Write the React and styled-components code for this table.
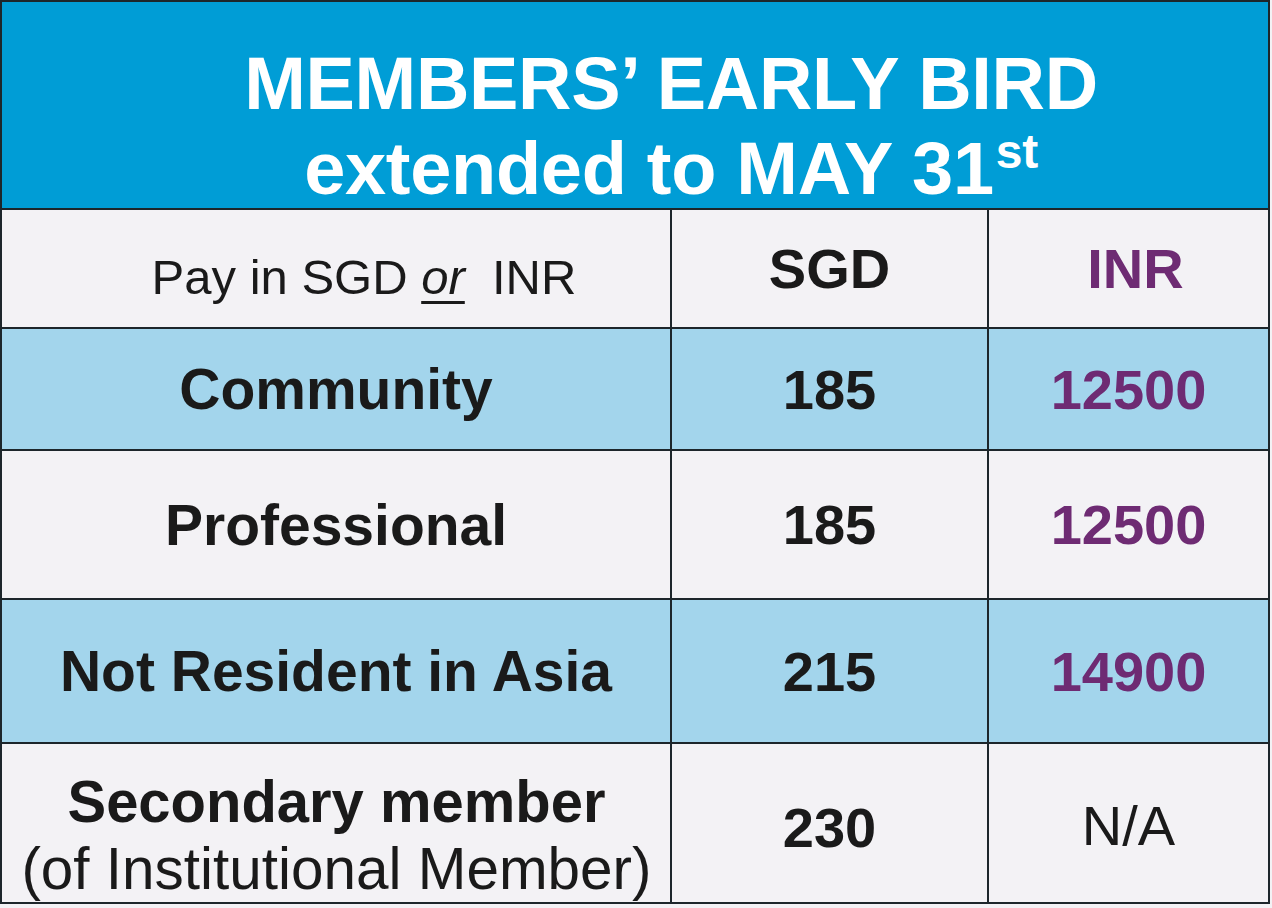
import { styled, createGlobalStyle } from "styled-components";

const GlobalStyle = createGlobalStyle`
  html, body {
    margin: 0;
    padding: 0;
    background: #f3f2f5;
  }
  body {
    font-family: "Liberation Sans", Arial, sans-serif;
    color: #1a1a1a;
  }
`

const rows = [
  { label: "Community", sgd: "185", inr: "12500", tint: true },
  { label: "Professional", sgd: "185", inr: "12500" },
  { label: "Not Resident in Asia", sgd: "215", inr: "14900", tint: true },
]

function App() {
  return (
    <>
      <GlobalStyle />
      <Frame>
        <Banner>
          <BannerLine>MEMBERS’ EARLY BIRD</BannerLine>
          <BannerLine>extended to MAY 31<Sup>st</Sup></BannerLine>
        </Banner>
        <Grid>
          <Cell $pad="16px 0 0 56px">
            <PayText>Pay in SGD <Or>or</Or>&nbsp; INR</PayText>
          </Cell>
          <Cell><Bold>SGD</Bold></Cell>
          <Cell $pad="0 0 0 14px"><Bold $purple>INR</Bold></Cell>

          {rows.map((r) => (
            <Row key={r.label} r={r} />
          ))}

          <Cell $column $pad="24px 0 0">
            <Squeeze $weight={700}>Secondary member</Squeeze>
            <Squeeze $weight={400}>(of Institutional Member)</Squeeze>
          </Cell>
          <Cell $pad="8px 0 0"><Bold>230</Bold></Cell>
          <Cell $pad="4px 0 0"><Plain>N/A</Plain></Cell>
        </Grid>
      </Frame>
    </>
  );
}

function Row({ r }) {
  return (
    <>
      <Cell $tint={r.tint}><Label>{r.label}</Label></Cell>
      <Cell $tint={r.tint}><Bold>{r.sgd}</Bold></Cell>
      <Cell $tint={r.tint}><Bold $purple>{r.inr}</Bold></Cell>
    </>
  )
}

export default App;

const Frame = styled.div`
  width: 1270px;
  box-sizing: border-box;
  border: 2px solid #1d262b;
  background: #1d262b;
`
const Banner = styled.div`
  height: 208px;
  box-sizing: border-box;
  border-bottom: 2px solid #1d262b;
  background: #009dd6;
  color: #fff;
  padding: 39px 0 0 72px;
  text-align: center;
  font-weight: 700;
  font-size: 74px;
  line-height: 85px;
  letter-spacing: -0.3px;
  overflow: hidden;
`
const BannerLine = styled.div`
  white-space: nowrap;
`
const Sup = styled.span`
  font-size: 48px;
  line-height: 1;
  vertical-align: 26px;
  margin-left: 2px;
`
const Grid = styled.div`
  display: grid;
  grid-template-columns: 668px 315px 279px;
  grid-template-rows: 117px 120px 147px 142px 158px;
  gap: 2px;
  background: #1d262b;
`
const Cell = styled.div`
  display: flex;
  flex-direction: ${(p) => (p.$column ? "column" : "row")};
  align-items: center;
  justify-content: center;
  background: ${(p) => (p.$tint ? "#a3d5ec" : "#f3f2f5")};
  padding: ${(p) => p.$pad || "0"};
  min-height: 0;
`
const PayText = styled.span`
  font-size: 49px;
  white-space: nowrap;
  color: #1a1a1a;
`
const Or = styled.span`
  font-style: italic;
  text-decoration: underline;
  text-decoration-thickness: 3px;
  text-underline-offset: 7px;
`
const Label = styled.span`
  font-size: 57px;
  font-weight: 700;
  color: #1a1a1a;
  white-space: nowrap;
`
const Bold = styled.span`
  font-size: 56px;
  font-weight: 700;
  color: ${(p) => (p.$purple ? "#6e2b73" : "#1a1a1a")};
`
const Plain = styled.span`
  font-size: 56px;
  color: #1a1a1a;
`
const Squeeze = styled.span`
  display: inline-block;
  font-size: 60px;
  line-height: 67px;
  font-weight: ${(p) => p.$weight};
  transform: scaleX(${(p) => (p.$weight === 700 ? 0.966 : 0.974)});
  white-space: nowrap;
  color: #1a1a1a;
`
